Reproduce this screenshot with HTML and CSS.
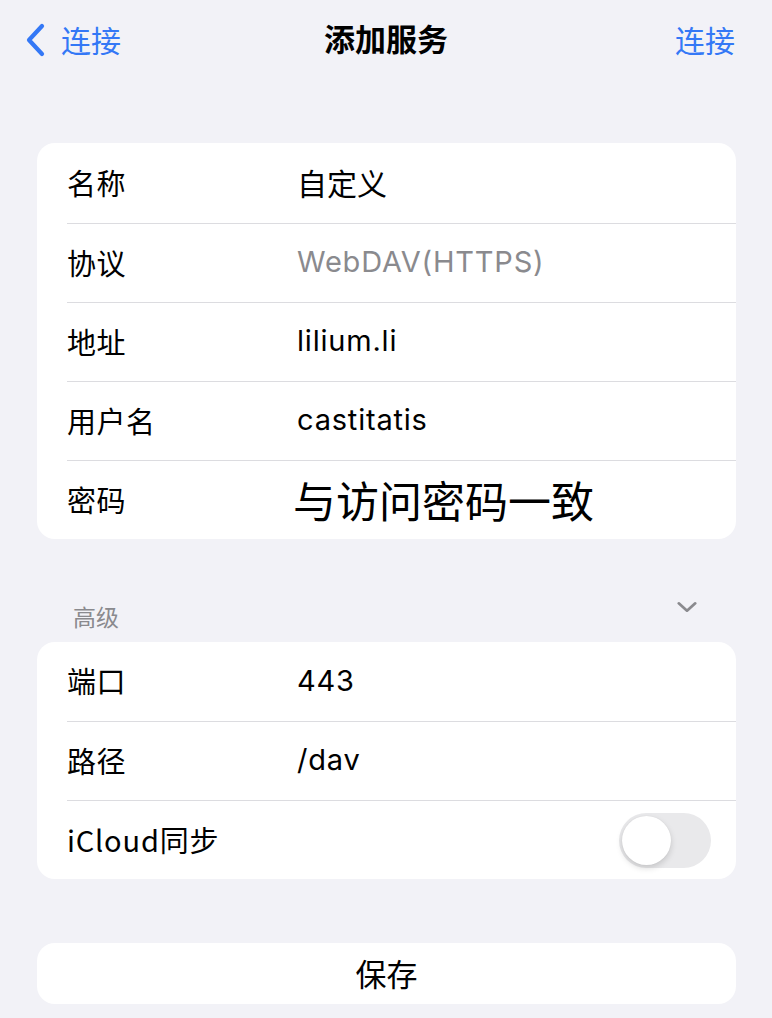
FILE: index.html
```html
<!DOCTYPE html>
<html lang="zh">
<head>
<meta charset="utf-8">
<link rel="stylesheet" href="styles.css">
</head>
<body>
<div class="page">
  <header class="nav">
    <div class="nav-left">
      <svg class="back" width="22" height="34" viewBox="0 0 22 34"><path d="M18 3 L5 17 L18 31" fill="none" stroke="#3478f6" stroke-width="4.2" stroke-linecap="round" stroke-linejoin="round"/></svg>
      <span class="link">连接</span>
    </div>
    <div class="title">添加服务</div>
    <div class="nav-right"><span class="link">连接</span></div>
  </header>

  <section class="card first">
    <div class="row"><span class="label">名称</span><span class="value cjk">自定义</span></div>
    <div class="row"><span class="label">协议</span><span class="value muted">WebDAV(HTTPS)</span></div>
    <div class="row"><span class="label">地址</span><span class="value">lilium.li</span></div>
    <div class="row"><span class="label">用户名</span><span class="value">castitatis</span></div>
    <div class="row"><span class="label">密码</span><span class="value big">与访问密码一致</span></div>
  </section>

  <div class="section-head">
    <span class="section-title">高级</span>
    <svg class="chev" width="24" height="16" viewBox="0 0 24 16"><path d="M3 4 L12 12 L21 4" fill="none" stroke="#8a8a8e" stroke-width="3" stroke-linecap="round" stroke-linejoin="round"/></svg>
  </div>

  <section class="card">
    <div class="row"><span class="label">端口</span><span class="value">443</span></div>
    <div class="row"><span class="label">路径</span><span class="value">/dav</span></div>
    <div class="row"><span class="label icloud">iCloud同步</span><span class="toggle"><span class="knob"></span></span></div>
  </section>

  <div class="save">保存</div>
</div>
</body>
</html>
```
FILE: styles.css
```css
html, body {
  margin: 0;
  padding: 0;
  background: #f2f2f7;
}
body {
  font-family: "Noto Sans CJK SC", "Inter", "Liberation Sans", sans-serif;
  color: #000;
  width: 772px;
  height: 1018px;
  overflow: hidden;
}
.page {
  padding: 0 36px 0 37px;
}
.nav {
  height: 80px;
  box-sizing: border-box;
  padding: 0 37px 3px 24px;
  display: flex;
  align-items: center;
  justify-content: space-between;
  margin: 0 -36px 0 -37px;
  position: relative;
}
.nav-left {
  display: flex;
  align-items: center;
  gap: 15px;
}
.back { display: block; margin-top: 3px; }
.link {
  color: #3478f6;
  font-size: 30px;
  line-height: 40px;
}
.title {
  position: absolute;
  left: 0; right: 0;
  top: 18px;
  text-align: center;
  font-size: 31px;
  font-weight: 700;
  line-height: 40px;
  pointer-events: none;
}
.card {
  background: #fff;
  border-radius: 18px;
  overflow: hidden;
}
.card.first { margin-top: 63px; }
.row {
  height: 79px;
  display: flex;
  align-items: center;
  margin-left: 30px;
  padding-bottom: 3px;
  position: relative;
  border-top: 1px solid #dcdce0;
  box-sizing: border-box;
}
.row:first-child { border-top: none; height: 79px; }
.card.first .row:first-child { height: 80px; }
.label {
  width: 230px;
  font-size: 29px;
  letter-spacing: 0.5px;
  flex-shrink: 0;
}
.label.icloud { width: auto; font-size: 29px; letter-spacing: 0.8px; }
.value {
  font-family: "Inter", "Noto Sans CJK SC", sans-serif;
  font-size: 29px;
  letter-spacing: 0.8px;
}
.value.cjk { font-family: "Noto Sans CJK SC", sans-serif; font-size: 30px; letter-spacing: 0; }
.value.muted { color: #8a8a8e; }
.value.big {
  font-family: "Noto Sans CJK SC", sans-serif;
  font-size: 43px;
  letter-spacing: 0;
  margin-left: -4px;
}
.section-head {
  height: 103px;
  display: flex;
  align-items: flex-end;
  justify-content: space-between;
  padding: 0 38px 0 36px;
  box-sizing: border-box;
}
.section-title {
  font-size: 23px;
  color: #8a8a8e;
  line-height: 26px;
  margin-bottom: 13px;
}
.chev { margin-bottom: 27px; width: 22px; }
.row .toggle { margin-top: 3px; }
.toggle {
  margin-left: auto;
  margin-right: 25px;
  width: 92px;
  height: 55px;
  border-radius: 28px;
  background: #e9e9eb;
  position: relative;
}
.knob {
  position: absolute;
  left: 3px;
  top: 3px;
  width: 49px;
  height: 49px;
  border-radius: 50%;
  background: #fff;
  box-shadow: 0 3px 6px rgba(0,0,0,0.15), 0 0 1px rgba(0,0,0,0.1);
}
.save {
  margin-top: 64px;
  height: 61px;
  box-sizing: border-box;
  padding-bottom: 3px;
  background: #fff;
  border-radius: 18px;
  display: flex;
  align-items: center;
  justify-content: center;
  font-size: 31px;
}
```
